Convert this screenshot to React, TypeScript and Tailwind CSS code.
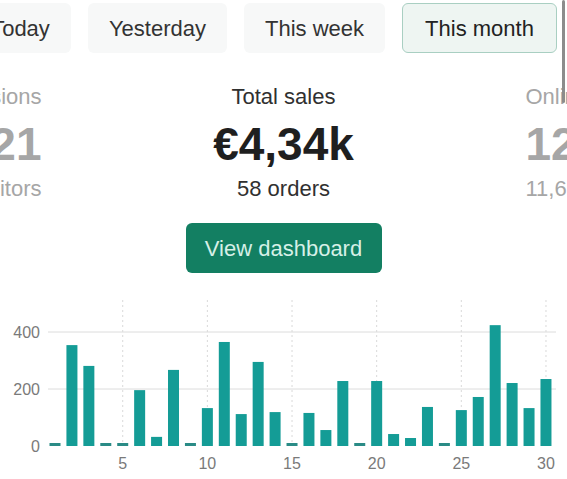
import React from "react";

const font = { fontFamily: '"Liberation Sans", Arial, sans-serif' };

const tabs = [
  { label: "Today", active: false, width: "w-[101px]" },
  { label: "Yesterday", active: false, width: "w-[139px]" },
  { label: "This week", active: false, width: "w-[141px]" },
  { label: "This month", active: true, width: "w-[155px]" },
];

const sales = [
  10, 354, 281, 10, 10, 196, 32, 267, 10, 133, 365, 112, 295, 119, 10, 116, 56, 228, 10, 228, 42, 28, 137, 10,
  126, 172, 424, 221, 133, 235,
];

const Chart = () => {
  const base = 156;
  const scale = 114 / 400;
  const dayX = (d: number) => 55 + (d - 1) * 16.93;
  return (
    <svg width="567" height="189" viewBox="0 0 567 189" className="block">
      {[5, 10, 15, 20, 25, 30].map((d) => (
        <line key={d} x1={dayX(d)} x2={dayX(d)} y1={10} y2={base} stroke="#d9d9d9" strokeWidth="1" strokeDasharray="2 3" />
      ))}
      {[400, 200].map((v) => (
        <line key={v} x1={48} x2={556} y1={base - v * scale} y2={base - v * scale} stroke="#dcdcdc" strokeWidth="1" />
      ))}
      {[400, 200, 0].map((v) => (
        <text key={v} x={40} y={base - v * scale + 6} textAnchor="end" fontSize="16" fill="#7a7a7a" style={font}>
          {v}
        </text>
      ))}
      {sales.map((v, i) => {
        const h = Math.max(3, v * scale);
        return <rect key={i} x={dayX(i + 1) - 5.5} y={base - h} width={11} height={h} fill={v <= 10 ? "#2a8b86" : "#149c96"} />;
      })}
      {[5, 10, 15, 20, 25, 30].map((d) => (
        <text key={d} x={dayX(d)} y={179} textAnchor="middle" fontSize="16" fill="#7a7a7a" style={font}>
          {d}
        </text>
      ))}
    </svg>
  );
};

export default function App() {
  return (
    <div className="relative w-[567px] h-[479px] overflow-hidden bg-white" style={font}>
      <div className="flex gap-[17px] pt-[3px] ml-[-30px]">
        {tabs.map((t) => (
          <button
            key={t.label}
            className={
              t.active
                ? `${t.width} h-[50px] shrink-0 rounded-[6px] border border-[#a9cfc2] bg-[#eef5f2] text-[22px] text-[#222]`
                : `${t.width} h-[50px] shrink-0 rounded-[6px] bg-[#f7f8f8] text-[22px] text-[#333]`
            }
          >
            {t.label}
          </button>
        ))}
      </div>

      <div className="mt-[31px] flex justify-center gap-[142px] overflow-hidden">
        <div className="w-[200px] shrink-0 text-right text-[#a6a6a6]">
          <p className="text-[22px] leading-[26px]">Sessions</p>
          <p className="mt-[8px] text-[46px] leading-[52px] font-bold">1,221</p>
          <p className="mt-[6px] text-[22px] leading-[26px]">1,021 visitors</p>
        </div>
        <div className="w-[200px] shrink-0 text-center">
          <p className="text-[22px] leading-[26px] text-[#303030]">Total sales</p>
          <p className="mt-[8px] text-[46px] leading-[52px] font-bold text-[#1f1f1f]">€4,34k</p>
          <p className="mt-[6px] text-[22px] leading-[26px] text-[#303030]">58 orders</p>
          <button className="mx-auto mt-[21px] block h-[50px] w-[196px] rounded-[6px] bg-[#137f62] text-[22px] text-[#d6f0e7]">
            View dashboard
          </button>
        </div>
        <div className="w-[200px] shrink-0 text-left text-[#a6a6a6]">
          <p className="text-[22px] leading-[26px] whitespace-nowrap">Online store visitors</p>
          <p className="mt-[8px] text-[46px] leading-[52px] font-bold">12,4k</p>
          <p className="mt-[6px] text-[22px] leading-[26px] whitespace-nowrap">11,6k sessions</p>
        </div>
      </div>

      <div className="mt-[17px]">
        <Chart />
      </div>

      <div className="absolute right-[2px] top-0 h-[103px] w-[3px] rounded-full bg-[#8c8c8c]" />
    </div>
  );
}
